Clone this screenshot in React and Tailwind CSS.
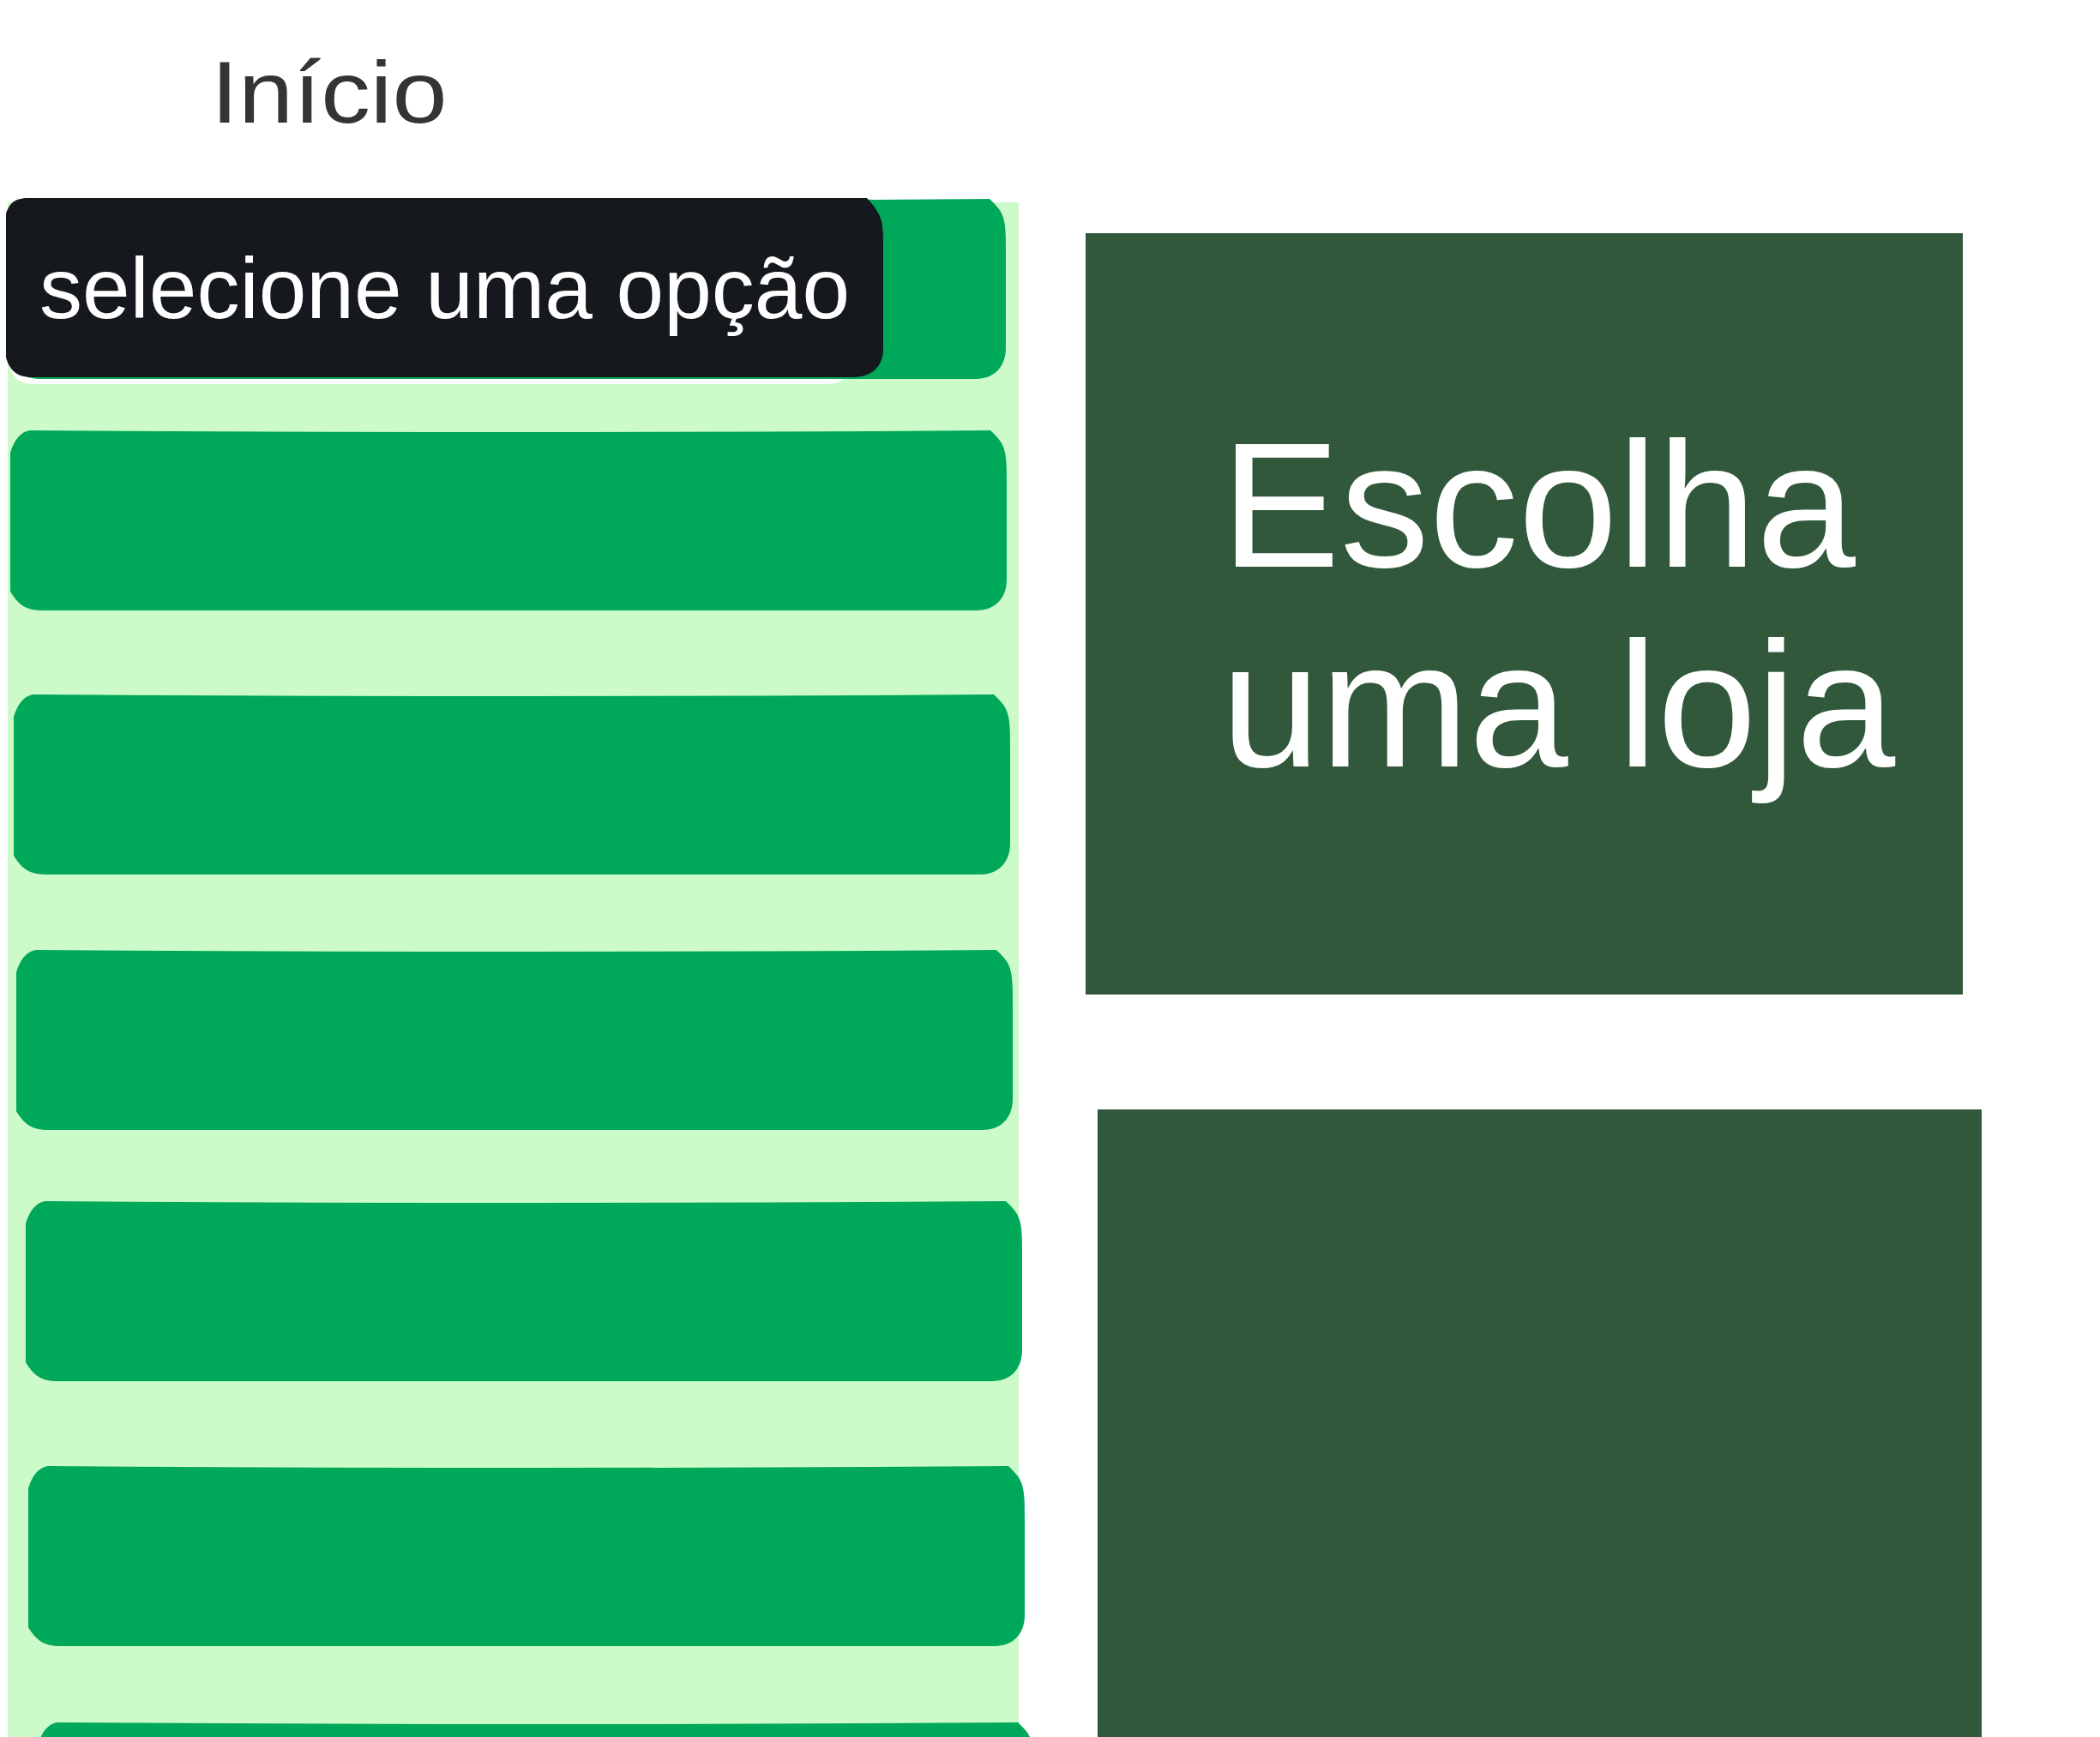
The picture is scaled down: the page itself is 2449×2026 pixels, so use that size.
import React from "react";

// wobbly card shape used for every option bar
const BAR_PATH =
  "M0 26 C4 14 10 2 23 0 Q600 4 1143 0 C1150 7 1156 12 1159 22 C1162 32 1162 45 1162 62 L1162 174 C1162 196 1148 210 1127 210 L38 210 C18 210 9 203 0 188 Z";

const DARK_PATH =
  "M0 18 C4 6 10 0 26 0 L1004 0 C1012 9 1020 18 1022 32 C1023 40 1023 50 1023 60 L1023 176 C1023 197 1009 209 988 209 L30 209 C12 209 4 200 0 186 Z";

const GreenBar = () => (
  <svg
    viewBox="0 0 1162 210"
    preserveAspectRatio="none"
    className="block w-[1162px] h-[210px]"
  >
    <path d={BAR_PATH} fill="#00a85a" />
  </svg>
);

// spacing between bars is a little uneven in the original
const barOffsets = [
  "mt-[60px] ml-[3px]",
  "mt-[98px] ml-[7px]",
  "mt-[88px] ml-[10px]",
  "mt-[83px] ml-[21px]",
  "mt-[99px] ml-[24px]",
  "mt-[89px] ml-[35px]",
];

const SelectBar = () => (
  <div className="relative shrink-0 -mt-[4px] ml-[2px] w-[1162px] h-[210px]">
    {/* white shadow under the dark select */}
    <svg
      viewBox="0 0 1023 209"
      preserveAspectRatio="none"
      className="absolute left-[-1px] top-[7px] w-[987px] h-[209px]"
    >
      <path d={DARK_PATH} fill="#ffffff" />
    </svg>
    <div className="relative">
      <GreenBar />
    </div>
    <div className="absolute left-[-4px] top-[-1px] w-[1023px] h-[209px]">
      <svg
        viewBox="0 0 1023 209"
        preserveAspectRatio="none"
        className="absolute inset-0 w-full h-full"
      >
        <path d={DARK_PATH} fill="#15191e" />
      </svg>
      <div className="relative h-full flex items-center pl-[39px]">
        <span className="text-[100px] leading-none text-white">
          selecione uma opção
        </span>
      </div>
    </div>
  </div>
);

export default function App() {
  return (
    <div className="h-[2026px] overflow-hidden bg-white flex font-['Liberation_Sans',Arial,sans-serif]">
      {/* left column */}
      <div className="w-[1188px] shrink-0 flex flex-col">
        <div className="h-[236px] shrink-0 pl-[246px] pt-[57px]">
          <h1 className="inline-block origin-left scale-x-[1.13] text-[102px] leading-none text-[#353434] font-normal">
            Início
          </h1>
        </div>
        <div className="ml-[9px] flex-1 bg-[#ccfac8] flex flex-col">
          <SelectBar />
          {barOffsets.map((cls, i) => (
            <div key={i} className={`shrink-0 ${cls}`}>
              <GreenBar />
            </div>
          ))}
        </div>
      </div>

      {/* right column */}
      <div className="flex flex-col pt-[272px]">
        <div className="shrink-0 ml-[78px] w-[1023px] h-[888px] bg-[#31583a] flex items-center pl-[158px] pb-[20px]">
          <p className="text-[208px] leading-[233px] text-white">
            Escolha
            <br />
            uma loja
          </p>
        </div>
        <div className="shrink-0 ml-[92px] mt-[134px] w-[1031px] h-[800px] bg-[#31583a]" />
      </div>
    </div>
  );
}
